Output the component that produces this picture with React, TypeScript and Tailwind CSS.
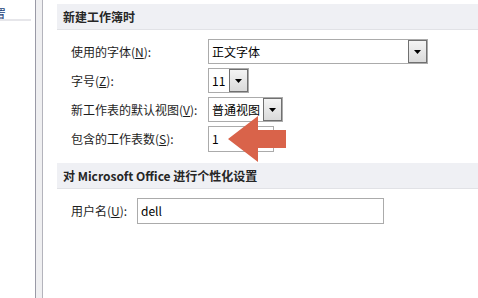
import React from "react";

const font = { fontFamily: '"Noto Sans CJK SC", "Liberation Sans", sans-serif' };

function DropBtn() {
  return (
    <div className="flex h-full w-[19px] items-center justify-center border border-[#707070] bg-gradient-to-b from-[#f4f4f4] to-[#dadada]">
      <svg width="7" height="4" viewBox="0 0 7 4">
        <path d="M0 0h7L3.5 4z" fill="#000" />
      </svg>
    </div>
  );
}

function Select({ value, width }: { value: string; width: string }) {
  return (
    <div className={`flex h-[25px] items-center border border-[#ababab] bg-white ${width}`}>
      <span className="flex-1 whitespace-nowrap pl-[3px] text-[12px] text-black">{value}</span>
      <div className="h-[23px]">
        <DropBtn />
      </div>
    </div>
  );
}

function Row({ label, u, rest, children }: { label: string; u: string; rest: string; children: React.ReactNode }) {
  return (
    <div className="flex h-[29px] items-center">
      <div className="w-[151px] shrink-0 whitespace-nowrap pl-[14px] text-[12px] text-[#1e1e1e]">
        {label}(<span className="underline">{u}</span>){rest}
      </div>
      {children}
    </div>
  );
}

export default function App() {
  return (
    <div className="flex h-[298px] w-[478px] overflow-hidden bg-white" style={font}>
      {/* left nav */}
      <div className="w-[35px] shrink-0">
        <div className="h-[19px] overflow-hidden">
          <span className="ml-[-7px] text-[13px] leading-[13px] text-[#1c3f7a] underline">置</span>
        </div>
        <div className="mr-[4px] h-[2px] bg-[#e6e6ea]" />
      </div>
      <div className="w-[8px] shrink-0 border-x border-l-[#9a9aa6] border-r-[#b4b4bc] bg-[#efeff1]" />

      {/* main */}
      <div className="flex-1 pl-[14px] pt-[4px]">
        <div className="flex h-[26px] items-center border-b border-[#e1e2e6] bg-[#eff0f4] pl-[6px] text-[12px] font-bold text-[#262626]">
          新建工作簿时
        </div>
        <div className="pt-[7px]">
          <Row label="使用的字体" u="N" rest=":">
            <Select value="正文字体" width="w-[220px]" />
          </Row>
          <Row label="字号" u="Z" rest=":">
            <Select value="11" width="w-[41px]" />
          </Row>
          <Row label="新工作表的默认视图" u="V" rest=":">
            <Select value="普通视图" width="w-[75px]" />
          </Row>
          <Row label="包含的工作表数" u="S" rest=":">
            <div className="relative flex h-[26px] w-[66px] items-center border border-[#ababab] bg-white">
              <span className="flex-1 pl-[3px] text-[12px] text-black">1</span>
              <div className="flex h-full w-[17px] flex-col border-l border-[#d0d0d0]">
                <div className="flex-1 border-b border-[#d0d0d0]" />
                <div className="flex-1" />
              </div>
              {/* callout arrow */}
              <svg className="absolute left-[19px] top-[-11px]" width="60" height="48" viewBox="0 0 60 48">
                <path d="M0 23 L30 0 L30 14 L58 14 L58 32 L30 32 L30 46 Z" fill="#d9634a" />
              </svg>
            </div>
          </Row>
        </div>
        <div className="mt-[10px] flex h-[26px] items-center border-b border-[#e1e2e6] bg-[#eff0f4] pl-[6px] text-[12px] font-bold text-[#262626]">
          对 Microsoft Office 进行个性化设置
        </div>
        <div className="flex h-[44px] items-center">
          <div className="w-[80px] shrink-0 whitespace-nowrap pl-[14px] text-[12px] text-[#1e1e1e]">
            用户名(<span className="underline">U</span>):
          </div>
          <div className="flex h-[26px] w-[247px] items-center border border-[#ababab] pl-[3px] text-[12px] text-black">
            dell
          </div>
        </div>
      </div>
    </div>
  );
}
